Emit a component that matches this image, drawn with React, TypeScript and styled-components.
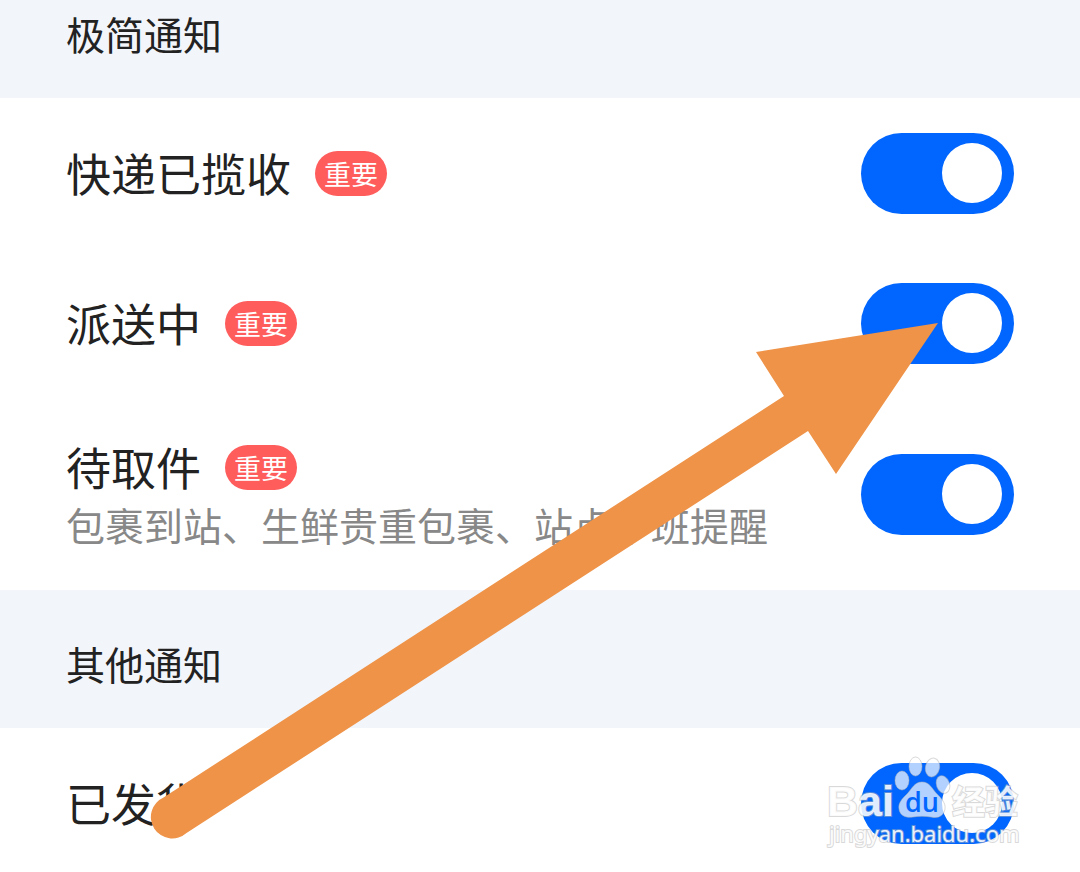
import React, { useState } from 'react';
import styled, { createGlobalStyle } from 'styled-components';

const GlobalStyle = createGlobalStyle`
  *, *::before { box-sizing: border-box; }
  body {
    margin: 0;
    background: #fff;
    color: #222;
    font-family: "Noto Sans CJK SC", "Noto Sans", sans-serif;
  }
`;

const Page = styled.main`
  position: relative;
  overflow: hidden;
`;

const SectionTitle = styled.h2<{ $first?: boolean }>`
  margin: 0;
  padding: ${(p) => (p.$first ? 4 : 44)}px 66px 36px;
  background: #f2f5fa;
  font-size: 39px;
  font-weight: 400;
  line-height: 58px;
`;

const List = styled.ul`
  margin: 0;
  padding: 0;
  list-style: none;
`;

const Row = styled.li<{ $tall?: boolean }>`
  display: flex;
  align-items: center;
  justify-content: space-between;
  min-height: ${(p) => (p.$tall ? 192 : 150)}px;
  padding: 0 66px;
`;

const LastRow = styled(Row)`
  min-height: 144px;
  padding-top: 6px;
`;

const Texts = styled.div`
  display: flex;
  flex-direction: column;
`;

const NameLine = styled.div`
  display: flex;
  align-items: center;
  gap: 24px;
`;

const Name = styled.label`
  font-size: 45px;
  line-height: 60px;
`;

const Badge = styled.span`
  padding: 0 9px;
  border-radius: 23px;
  background: #ff5c5c;
  color: #fff;
  font-size: 27px;
  line-height: 45px;
`;

const Note = styled.p`
  margin: 0;
  color: #888;
  font-size: 39px;
  line-height: 54px;
`;

const Switch = styled.input`
  appearance: none;
  display: flex;
  align-items: center;
  flex: none;
  width: 153px;
  height: 81px;
  margin: 0;
  padding: 0 12px;
  border-radius: 41px;
  background: #ccc;
  cursor: pointer;

  &::before {
    content: "";
    width: 60px;
    height: 60px;
    border-radius: 50%;
    background: #fff;
  }

  &:checked {
    justify-content: flex-end;
    background: #06f;
  }
`;

const Arrow = styled.svg`
  position: absolute;
  top: 310px;
  right: 130px;
  pointer-events: none;
`;

const Watermark = styled.svg`
  position: absolute;
  top: 750px;
  right: 50px;
  pointer-events: none;

  text {
    fill: #fff;
    fill-opacity: 0.9;
    stroke: #b4b4b4;
    stroke-opacity: 0.5;
    stroke-width: 2px;
    paint-order: stroke;
  }

  .mark {
    fill: #06f;
    fill-opacity: 1;
    stroke: none;
  }
`;

type Item = { id: string; name: string; important?: boolean; note?: string };

const simple: Item[] = [
  { id: 'collected', name: '快递已揽收', important: true },
  { id: 'delivering', name: '派送中', important: true },
  {
    id: 'pickup',
    name: '待取件',
    important: true,
    note: '包裹到站、生鲜贵重包裹、站点下班提醒',
  },
];

const other: Item[] = [{ id: 'shipped', name: '已发货' }];

function Setting({ item, last }: { item: Item; last?: boolean }) {
  const [on, setOn] = useState(true);
  const Wrapper = last ? LastRow : Row;
  return (
    <Wrapper $tall={Boolean(item.note)}>
      <Texts>
        <NameLine>
          <Name htmlFor={item.id}>{item.name}</Name>
          {item.important && <Badge>重要</Badge>}
        </NameLine>
        {item.note && <Note>{item.note}</Note>}
      </Texts>
      <Switch
        id={item.id}
        type="checkbox"
        role="switch"
        checked={on}
        onChange={(e) => setOn(e.target.checked)}
      />
    </Wrapper>
  );
}

export default function App() {
  return (
    <Page>
      <GlobalStyle />
      <SectionTitle $first>极简通知</SectionTitle>
      <List>
        {simple.map((item) => (
          <Setting key={item.id} item={item} />
        ))}
      </List>
      <SectionTitle>其他通知</SectionTitle>
      <List>
        {other.map((item) => (
          <Setting key={item.id} item={item} last />
        ))}
      </List>

      <Arrow width="800" height="530" viewBox="150 310 800 530" aria-hidden="true">
        <path
          d="M938 323 L756 352 L784 396 L163.5 797.5 A21.4 21.4 0 1 0 186.500 833 L808 431 L836 474 Z"
          fill="#ee9348"
        />
      </Arrow>

      <Watermark width="210" height="110" viewBox="820 750 210 110" aria-hidden="true">
        <text x="827" y="816" fontFamily="Liberation Sans" fontWeight="700" fontSize="43">
          Bai
        </text>
        <g fill="#fff" fillOpacity="0.7" stroke="#b4b4b4" strokeOpacity="0.5">
          <ellipse cx="902" cy="780.5" rx="7" ry="9.5" />
          <ellipse cx="915.500" cy="766.5" rx="6.5" ry="9.5" />
          <ellipse cx="932.5" cy="767.5" rx="7" ry="9.5" transform="rotate(12 932.5 767.5)" />
          <ellipse cx="943" cy="784.5" rx="6.5" ry="9" transform="rotate(-20 943 784.5)" />
          <path d="M922 782 C914 782 912 789 907 794 C902 799 898 803 899 809 C900 816 906 818 913 817 C919 816 925 816 931 817 C939 819 944 815 945 809 C946 803 941 798 937 794 C932 789 930 782 922 782 Z" />
        </g>
        <text
          className="mark"
          x="905"
          y="812"
          fontFamily="Open Sans"
          fontWeight="600"
          fontSize="27"
        >
          du
        </text>
        <text x="952" y="814" fontFamily="Noto Sans CJK SC" fontWeight="700" fontSize="33">
          经验
        </text>
        <text x="829" y="842" fontFamily="Noto Sans" fontSize="22">
          jingyan.baidu.com
        </text>
      </Watermark>
    </Page>
  );
}
